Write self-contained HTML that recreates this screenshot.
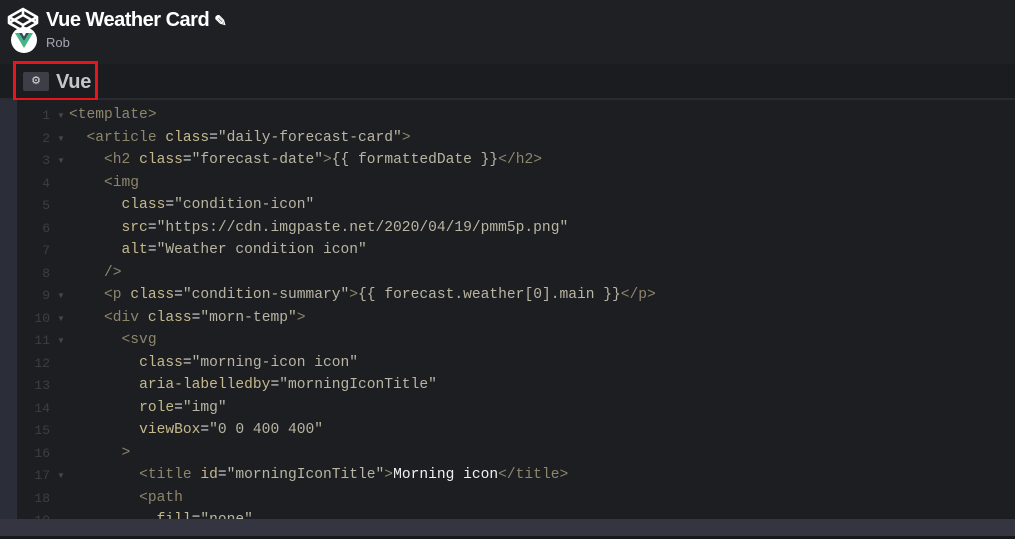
<!DOCTYPE html>
<html><head><meta charset="utf-8"><style>
body{margin:0;width:1015px;height:539px;overflow:hidden;background:#1f2024;font-family:"Liberation Sans",sans-serif;position:relative}
.hdr{position:absolute;left:0;top:0;width:1015px;height:64px;background:#1f2024}
.title{position:absolute;left:46px;top:9px;color:#fff;font-size:20px;font-weight:bold;letter-spacing:-0.5px}
.rob{position:absolute;left:46px;top:35px;color:#a6a8b3;font-size:13px}
.tabbar{position:absolute;left:0;top:64px;width:1015px;height:34px;background:#1b1c1f;border-bottom:2px solid #2a2b30}
.redbox{position:absolute;left:13px;top:61px;width:85px;height:40px;border:3px solid #e8161b;box-sizing:border-box}
.gear{position:absolute;left:23px;top:72px;width:26px;height:19px;background:#3d3f48;border-radius:2px;color:#ddd;font-size:11px;text-align:center;line-height:19px}
.vue{position:absolute;left:56px;top:71px;color:#c5c6cc;font-size:20px;font-weight:bold;letter-spacing:-0.3px}
.strip{position:absolute;left:0;top:100px;width:17px;height:419px;background:#2b2e38}
.editor{position:absolute;left:17px;top:100px;width:998px;height:419px;background:#1d1e22;overflow:hidden}
.bot{position:absolute;left:0;top:519px;width:1015px;height:17px;background:#343540}
.botline{position:absolute;left:0;top:536px;width:1015px;height:3px;background:#17181b}
.ln{position:absolute;left:0;width:33px;text-align:right;color:#3c3e44;font:13px "Liberation Mono",monospace}
.ar{position:absolute;left:40px;color:#45474d;font-size:8px}
.code{position:absolute;left:52px;white-space:pre;font:14.6px "Liberation Mono",monospace;color:#d8d8d8}
.t{color:#8d866b}.a{color:#c4b98c}.s{color:#b9b5a2}.w{color:#d2d2d2}.m{color:#f0f0f0}
</style></head><body>
<div class="hdr"></div>
<svg style="position:absolute;left:7px;top:7px" width="32" height="26" viewBox="0 0 32 26"><g fill="none" stroke="#fff" stroke-width="2.6" stroke-linejoin="round"><path d="M16 2 L30 10 L30 16 L16 24 L2 16 L2 10 Z"/><path d="M2 10 L16 18 L30 10 M16 2 L16 8 M2 16 L16 8 L30 16 M16 18 L16 24"/></g></svg>
<div style="position:absolute;left:11px;top:27px;width:26px;height:26px;border-radius:50%;background:#fff"></div>
<svg style="position:absolute;left:15px;top:33px" width="18" height="15" viewBox="0 0 18 15"><path d="M0 0 L9 15 L18 0 L14 0 L9 8 L4 0Z" fill="#41b883"/><path d="M4 0 L9 8 L14 0 L11 0 L9 3.5 L7 0Z" fill="#35495e"/></svg>
<div class="title">Vue Weather Card <span style="font-size:15px">✎</span></div>
<div class="rob">Rob</div>
<div class="tabbar"></div>
<div class="gear">⚙</div>
<div class="vue">Vue</div>
<div class="redbox"></div>
<div class="strip"></div>
<div class="editor">
<div class="ln" style="top:8px">1</div><div class="ar" style="top:11px">▼</div><div class="code" style="top:7px"><span class="t">&lt;template&gt;</span></div>
<div class="ln" style="top:30.5px">2</div><div class="ar" style="top:33.5px">▼</div><div class="code" style="top:29.5px">  <span class="t">&lt;article</span> <span class="a">class</span><span class="w">=</span><span class="s">"daily-forecast-card"</span><span class="t">&gt;</span></div>
<div class="ln" style="top:53px">3</div><div class="ar" style="top:56px">▼</div><div class="code" style="top:52px">    <span class="t">&lt;h2</span> <span class="a">class</span><span class="w">=</span><span class="s">"forecast-date"</span><span class="t">&gt;</span><span class="s">{{ formattedDate }}</span><span class="t">&lt;/h2&gt;</span></div>
<div class="ln" style="top:75.5px">4</div><div class="code" style="top:74.5px">    <span class="t">&lt;img</span></div>
<div class="ln" style="top:98px">5</div><div class="code" style="top:97px">      <span class="a">class</span><span class="w">=</span><span class="s">"condition-icon"</span></div>
<div class="ln" style="top:120.5px">6</div><div class="code" style="top:119.5px">      <span class="a">src</span><span class="w">=</span><span class="s">"https://cdn.imgpaste.net/2020/04/19/pmm5p.png"</span></div>
<div class="ln" style="top:143px">7</div><div class="code" style="top:142px">      <span class="a">alt</span><span class="w">=</span><span class="s">"Weather condition icon"</span></div>
<div class="ln" style="top:165.5px">8</div><div class="code" style="top:164.5px">    <span class="t">/&gt;</span></div>
<div class="ln" style="top:188px">9</div><div class="ar" style="top:191px">▼</div><div class="code" style="top:187px">    <span class="t">&lt;p</span> <span class="a">class</span><span class="w">=</span><span class="s">"condition-summary"</span><span class="t">&gt;</span><span class="s">{{ forecast.weather[0].main }}</span><span class="t">&lt;/p&gt;</span></div>
<div class="ln" style="top:210.5px">10</div><div class="ar" style="top:213.5px">▼</div><div class="code" style="top:209.5px">    <span class="t">&lt;div</span> <span class="a">class</span><span class="w">=</span><span class="s">"morn-temp"</span><span class="t">&gt;</span></div>
<div class="ln" style="top:233px">11</div><div class="ar" style="top:236px">▼</div><div class="code" style="top:232px">      <span class="t">&lt;svg</span></div>
<div class="ln" style="top:255.5px">12</div><div class="code" style="top:254.5px">        <span class="a">class</span><span class="w">=</span><span class="s">"morning-icon icon"</span></div>
<div class="ln" style="top:278px">13</div><div class="code" style="top:277px">        <span class="a">aria-labelledby</span><span class="w">=</span><span class="s">"morningIconTitle"</span></div>
<div class="ln" style="top:300.5px">14</div><div class="code" style="top:299.5px">        <span class="a">role</span><span class="w">=</span><span class="s">"img"</span></div>
<div class="ln" style="top:323px">15</div><div class="code" style="top:322px">        <span class="a">viewBox</span><span class="w">=</span><span class="s">"0 0 400 400"</span></div>
<div class="ln" style="top:345.5px">16</div><div class="code" style="top:344.5px">      <span class="t">&gt;</span></div>
<div class="ln" style="top:368px">17</div><div class="ar" style="top:371px">▼</div><div class="code" style="top:367px">        <span class="t">&lt;title</span> <span class="a">id</span><span class="w">=</span><span class="s">"morningIconTitle"</span><span class="t">&gt;</span><span class="m">Morning icon</span><span class="t">&lt;/title&gt;</span></div>
<div class="ln" style="top:390.5px">18</div><div class="code" style="top:389.5px">        <span class="t">&lt;path</span></div>
<div class="ln" style="top:413px">19</div><div class="code" style="top:412px">          <span class="a">fill</span><span class="w">=</span><span class="s">"none"</span></div>
</div>
<div class="bot"></div><div class="botline"></div>
</body></html>
